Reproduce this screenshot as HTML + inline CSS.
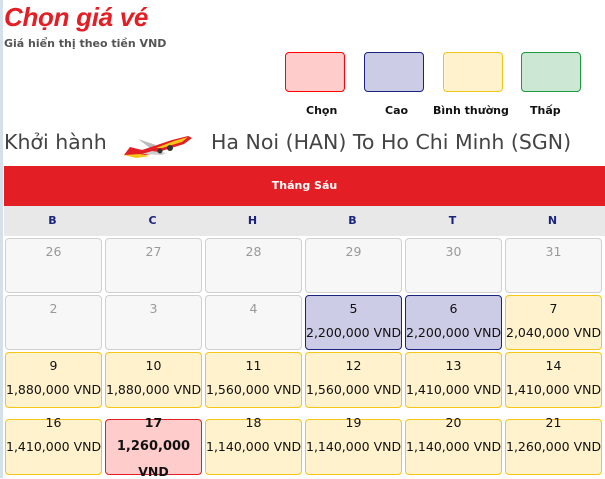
<!DOCTYPE html>
<html><head><meta charset="utf-8"><style>
*{margin:0;padding:0;box-sizing:border-box}
body{width:605px;height:478px;overflow:hidden;background:#fff;font-family:"DejaVu Sans",Verdana,sans-serif;position:relative}
.strip{position:absolute;left:0;top:0;width:3px;height:478px;background:#d4e0ea}
h1{position:absolute;left:4px;top:2px;font:italic bold 26px "Liberation Sans",sans-serif;color:#e31e24;letter-spacing:-0.3px}
.sub{position:absolute;left:4px;top:37px;font-size:11px;font-weight:bold;color:#555}
.lg{position:absolute;top:52px;width:60px;height:40px;border-radius:4px;border:1px solid}
.ll{position:absolute;top:104px;font-size:11px;font-weight:bold;color:#111;white-space:nowrap}
.route{position:absolute;top:130px;font-size:20.5px;color:#444;white-space:nowrap}
.red{position:absolute;left:4px;top:166px;width:601px;height:40px;background:#e31e24;color:#fff;font-size:11px;font-weight:bold;text-align:center;line-height:40px}
.hd{position:absolute;left:4px;top:206px;width:601px;height:30px;background:#e8e8e8}
.hd span{position:absolute;top:8px;width:97px;text-align:center;font-size:11px;font-weight:bold;color:#1a237e}
.c{position:absolute;width:97px;border-radius:4px;border:1px solid;text-align:center;font-size:12.5px;color:#111}
.c .d{position:absolute;top:5px;left:0;width:100%}
.c .p{position:absolute;top:29px;left:0;width:100%;white-space:nowrap}
.e{background:#f7f7f7;border-color:#d0d0d0;color:#999}
.h{background:#cccce6;border-color:#1a237e}
.n{background:#fff2cc;border-color:#f5c518}
.s{background:#ffcccc;border-color:#e31e24;font-weight:bold}
</style></head><body>
<div class="strip"></div>
<h1>Chọn giá vé</h1>
<div class="sub">Giá hiển thị theo tiền VND</div>
<div class="lg" style="left:285px;background:#ffcccc;border-color:#f00"></div>
<div class="lg" style="left:364px;background:#ccccE6;border-color:#1a237e"></div>
<div class="lg" style="left:443px;background:#fff2cc;border-color:#f5c518"></div>
<div class="lg" style="left:521px;background:#cce8d4;border-color:#1a9a3a"></div>
<div class="ll" style="left:306px">Chọn</div>
<div class="ll" style="left:385px">Cao</div>
<div class="ll" style="left:433px">Bình thường</div>
<div class="ll" style="left:530px">Thấp</div>
<div class="route" style="left:4px">Khởi hành</div>
<svg style="position:absolute;left:122px;top:133px" width="72" height="26" viewBox="0 0 72 26">
<path d="M16 6 L34 12 L28 15Z" fill="#bbb"/>
<path d="M2 22 L8 14 L20 17 L50 7 L66 3 L70 5 L62 11 L30 21 L12 24Z" fill="#e31e24"/>
<path d="M34 15 L52 8 L66 4 L60 9 L40 15Z" fill="#f5c518"/>
<path d="M2 22 L18 21 L28 23 L14 25Z" fill="#f5c518"/>
<path d="M20 21 L40 22 L44 20 L30 18Z" fill="#ccc"/>
<circle cx="48" cy="15" r="3" fill="#333"/><circle cx="38" cy="18" r="2.5" fill="#333"/>
</svg>
<div class="route" style="left:211px">Ha Noi (HAN) To Ho Chi Minh (SGN)</div>
<div class="red">Tháng Sáu</div>
<div class="hd">
<span style="left:0">B</span><span style="left:100px">C</span><span style="left:200px">H</span><span style="left:300px">B</span><span style="left:400px">T</span><span style="left:500px">N</span>
</div>
<div class="c e" style="left:5px;top:238px;height:55px"><div class="d">26</div></div>
<div class="c e" style="left:105px;top:238px;height:55px"><div class="d">27</div></div>
<div class="c e" style="left:205px;top:238px;height:55px"><div class="d">28</div></div>
<div class="c e" style="left:305px;top:238px;height:55px"><div class="d">29</div></div>
<div class="c e" style="left:405px;top:238px;height:55px"><div class="d">30</div></div>
<div class="c e" style="left:505px;top:238px;height:55px"><div class="d">31</div></div>
<div class="c e" style="left:5px;top:295px;height:55px"><div class="d">2</div></div>
<div class="c e" style="left:105px;top:295px;height:55px"><div class="d">3</div></div>
<div class="c e" style="left:205px;top:295px;height:55px"><div class="d">4</div></div>
<div class="c h" style="left:305px;top:295px;height:55px"><div class="d">5</div><div class="p">2,200,000 VND</div></div>
<div class="c h" style="left:405px;top:295px;height:55px"><div class="d">6</div><div class="p">2,200,000 VND</div></div>
<div class="c n" style="left:505px;top:295px;height:55px"><div class="d">7</div><div class="p">2,040,000 VND</div></div>
<div class="c n" style="left:5px;top:352px;height:56px"><div class="d">9</div><div class="p">1,880,000 VND</div></div>
<div class="c n" style="left:105px;top:352px;height:56px"><div class="d">10</div><div class="p">1,880,000 VND</div></div>
<div class="c n" style="left:205px;top:352px;height:56px"><div class="d">11</div><div class="p">1,560,000 VND</div></div>
<div class="c n" style="left:305px;top:352px;height:56px"><div class="d">12</div><div class="p">1,560,000 VND</div></div>
<div class="c n" style="left:405px;top:352px;height:56px"><div class="d">13</div><div class="p">1,410,000 VND</div></div>
<div class="c n" style="left:505px;top:352px;height:56px"><div class="d">14</div><div class="p">1,410,000 VND</div></div>
<div class="c n" style="left:5px;top:419px;height:56px"><div class="d" style="top:-5px">16</div><div class="p" style="top:19px">1,410,000 VND</div></div>
<div class="c s" style="left:105px;top:419px;height:56px"><div class="d" style="top:-5px">17</div><div class="p" style="top:19px;font-size:13px">1,260,000</div><div class="p" style="top:44px">VND</div></div>
<div class="c n" style="left:205px;top:419px;height:56px"><div class="d" style="top:-5px">18</div><div class="p" style="top:19px">1,140,000 VND</div></div>
<div class="c n" style="left:305px;top:419px;height:56px"><div class="d" style="top:-5px">19</div><div class="p" style="top:19px">1,140,000 VND</div></div>
<div class="c n" style="left:405px;top:419px;height:56px"><div class="d" style="top:-5px">20</div><div class="p" style="top:19px">1,140,000 VND</div></div>
<div class="c n" style="left:505px;top:419px;height:56px"><div class="d" style="top:-5px">21</div><div class="p" style="top:19px">1,260,000 VND</div></div>
</body></html>
